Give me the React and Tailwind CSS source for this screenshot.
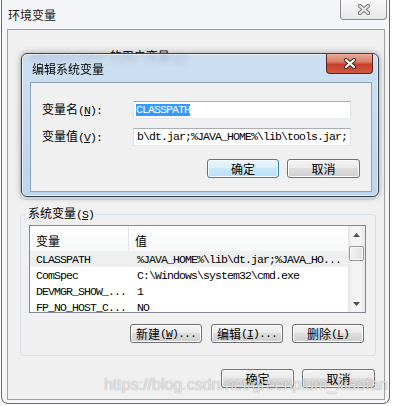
import React from 'react';

const mono = "font-['Liberation_Mono','Noto_Sans_CJK_SC',monospace] text-[11.5px] tracking-[-0.9px]";

function M({ children }) {
  return <span className={mono}>{children}</span>;
}

function XGlyph({ fill, edge }) {
  const d = 'M3 2 L11 9 M11 2 L3 9';
  return (
    <svg width="14" height="11" viewBox="0 0 14 11">
      <path d={d} stroke={edge} strokeWidth="4.2" strokeLinecap="round" fill="none" />
      <path d={d} stroke={fill} strokeWidth="2.2" strokeLinecap="round" fill="none" />
    </svg>
  );
}

function Btn({ children, className = '', focus }) {
  const look = focus
    ? 'border-[#3c7fb1] bg-[linear-gradient(#e8f5fc_0%,#dceffb_49%,#c9e8f9_50%,#b6dff6_100%)] shadow-[inset_0_0_0_1px_#f4fbff]'
    : 'border-[#707070] bg-[linear-gradient(#f2f2f2_0%,#ebebeb_49%,#dddddd_50%,#cfcfcf_100%)] shadow-[inset_0_0_0_1px_#fcfcfc]';
  return (
    <div className={`h-[19px] flex items-center justify-center rounded-[3px] border ${look} ${className}`}>
      {children}
    </div>
  );
}

function Arrow({ up }) {
  return (
    <svg width="7" height="4" viewBox="0 0 7 4">
      <path d={up ? 'M0 4 L3.5 0 L7 4 Z' : 'M0 0 L7 0 L3.5 4 Z'} fill="#4d4d4d" />
    </svg>
  );
}

const rows = [
  ['CLASSPATH', '%JAVA_HOME%\\lib\\dt.jar;%JAVA_HO...', true],
  ['ComSpec', 'C:\\Windows\\system32\\cmd.exe'],
  ['DEVMGR_SHOW_...', '1'],
  ['FP_NO_HOST_C...', 'NO'],
];

function ListView() {
  return (
    <div className="mt-[3px] ml-[8px] w-[337px] h-[88px] border border-[#828790] bg-white flex overflow-hidden">
      <div className="flex-1 flex flex-col">
        <div className="h-[25px] flex shrink-0 bg-[linear-gradient(#ffffff,#f7f8f9)]">
          <div className="w-[99px] pl-[6px] pt-[8px] border-r border-[#e5e5e5]">变量</div>
          <div className="pl-[6px] pt-[8px]">值</div>
        </div>
        {rows.map(([k, v, sel]) => (
          <div key={k} className={`h-[16px] shrink-0 flex items-center whitespace-nowrap ${sel ? 'bg-[#efefef]' : ''}`}>
            <div className="w-[100px] pl-[6px] overflow-hidden"><M>{k}</M></div>
            <div className="pl-[7px]"><M>{v}</M></div>
          </div>
        ))}
      </div>
      <div className="w-[17px] flex flex-col items-center bg-[linear-gradient(90deg,#e6e6e6,#f4f4f4_25%,#f4f4f4_75%,#e6e6e6)]">
        <div className="h-[17px] flex items-center justify-center"><Arrow up /></div>
        <div className="mt-[3px] w-[15px] h-[15px] rounded-[2px] border border-[#979797] bg-[linear-gradient(90deg,#f3f3f3,#e2e2e2)] shadow-[inset_0_0_0_1px_#fafafa]" />
        <div className="flex-1" />
        <div className="h-[17px] flex items-center justify-center"><Arrow /></div>
      </div>
    </div>
  );
}

export default function App() {
  return (
    <div className="relative w-[394px] h-[406px] overflow-hidden bg-white font-['Noto_Sans_CJK_SC',sans-serif] text-[12px] leading-[14px] text-black">
      {/* 环境变量 window */}
      <div className="absolute left-[1px] top-0 w-[389px] h-[404px] flex flex-col border-x border-b border-[#6a6a6a] rounded-b-[7px] bg-[#f3f5f8]">
        <div className="h-[29px] shrink-0 flex items-start justify-between">
          <div className="pl-[6px] pt-[8px] text-[#1a1a1a]">环境变量</div>
          <div className="mr-[2px] w-[47px] h-[20px] flex items-center justify-center border border-t-0 border-[#8e8e8e] rounded-b-[4px] bg-[linear-gradient(#f8f8f8,#e8e8e8)]">
            <XGlyph fill="#e6e6e6" edge="#7b7b7b" />
          </div>
        </div>
        <div className="flex-1 ml-[5px] mr-[4px] mb-[3px] border border-[#a0a0a0] bg-[#f0f0f0] flex flex-col">
          <fieldset className="mt-[19px] ml-[12px] mr-[8px] h-[151px] border border-[#d5dfe5] rounded-[3px]">
            <legend className="ml-[6px] px-[2px] leading-[14px]"><M>Administrator</M> 的用户变量<M>(<u>U</u>)</M></legend>
          </fieldset>
          <fieldset className="mt-[6px] ml-[12px] mr-[8px] pb-[12px] border border-[#d5dfe5] rounded-[3px]">
            <legend className="ml-[5px] px-[2px] leading-[14px]">系统变量<M>(<u>S</u>)</M></legend>
            <ListView />
            <div className="mt-[11px] mr-[11px] flex justify-end gap-[9px]">
              <Btn className="w-[72px]">新建<M>(<u>W</u>)...</M></Btn>
              <Btn className="w-[72px]">编辑<M>(<u>I</u>)...</M></Btn>
              <Btn className="w-[72px]">删除<M>(<u>L</u>)</M></Btn>
            </div>
          </fieldset>
          <div className="mt-[13px] mr-[9px] flex justify-end gap-[8px]">
            <Btn className="w-[73px]">确定</Btn>
            <Btn className="w-[73px]">取消</Btn>
          </div>
        </div>
      </div>

      {/* 编辑系统变量 dialog */}
      <div className="absolute left-[21px] top-[53px] w-[358px] h-[144px] flex flex-col border border-[#33465a] rounded-[6px] bg-[linear-gradient(180deg,rgba(198,219,241,0.82),rgba(184,209,236,0.9))] backdrop-blur-[3px] shadow-[0_0_6px_rgba(0,0,0,0.35),inset_0_0_0_1px_rgba(255,255,255,0.55)]">
        <div className="h-[28px] shrink-0 flex items-start justify-between">
          <div className="pl-[10px] pt-[8px]">编辑系统变量</div>
          <div className="mr-[5px] w-[47px] h-[20px] flex items-center justify-center border border-t-0 border-[#5e2419] rounded-b-[4px] bg-[linear-gradient(#e9aa9a_0%,#d8806a_40%,#c4402a_55%,#cf5a3f_100%)]">
            <XGlyph fill="#ffffff" edge="#4a2a24" />
          </div>
        </div>
        <div className="h-[110px] ml-[8px] mr-[6px] border border-[#8ea4bd] bg-[#f0f0f0] flex flex-col">
          <div className="mt-[18px] flex items-center">
            <div className="w-[102px] pl-[11px]">变量名<M>(<u>N</u>):</M></div>
            <div className="w-[218px] h-[18px] border border-[#abadb3] border-x-[#dbdfe6] border-b-[#e3e9ef] bg-white flex items-center pl-[2px]">
              <span className={`${mono} bg-[#3399ff] text-white leading-[12px]`}>CLASSPATH</span>
            </div>
          </div>
          <div className="mt-[9px] flex items-center">
            <div className="w-[102px] pl-[11px]">变量值<M>(<u>V</u>):</M></div>
            <div className="w-[218px] h-[18px] border border-[#abadb3] border-x-[#dbdfe6] border-b-[#e3e9ef] bg-white flex items-center pl-[3px] overflow-hidden whitespace-nowrap">
              <M>b\dt.jar;%JAVA_HOME%\lib\tools.jar;</M>
            </div>
          </div>
          <div className="mt-[13px] mr-[11px] flex justify-end gap-[8px]">
            <Btn focus className="w-[72px]">确定</Btn>
            <Btn className="w-[73px]">取消</Btn>
          </div>
        </div>
      </div>

      <div className="absolute left-[104px] top-[376px] font-['Liberation_Sans',sans-serif] text-[16px] leading-[18px] text-[rgba(255,255,255,0.75)] [text-shadow:0_0_1px_rgba(0,0,0,0.45)] whitespace-nowrap">
        https://blog.csdn.net/greenplum_xiaofan
      </div>
    </div>
  );
}
